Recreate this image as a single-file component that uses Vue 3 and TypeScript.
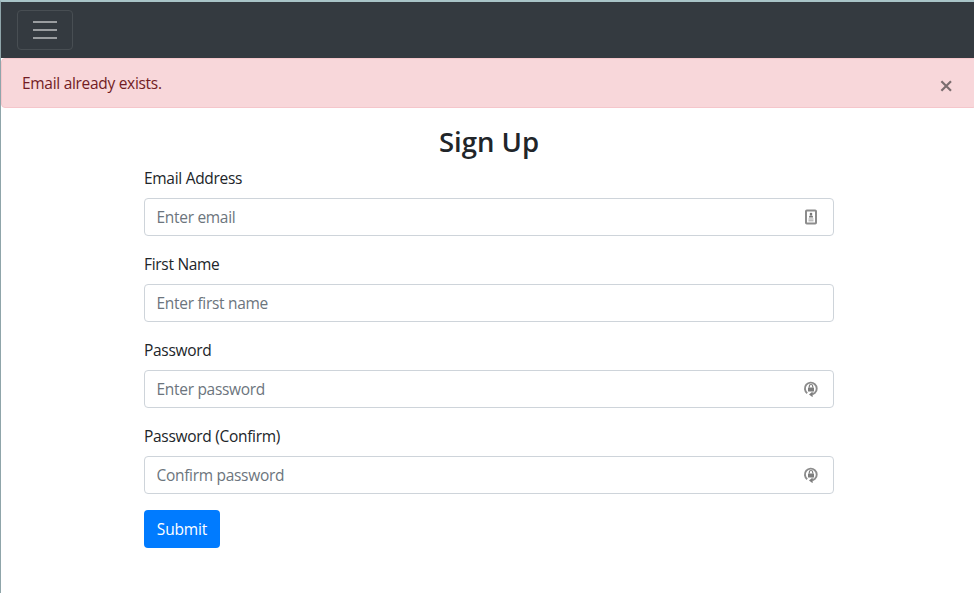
<script setup lang="ts">
import { ref } from 'vue'

interface Field {
  id: string
  label: string
  type: string
  placeholder: string
  icon?: 'contact' | 'lock'
}

const fields: Field[] = [
  { id: 'email', label: 'Email Address', type: 'email', placeholder: 'Enter email', icon: 'contact' },
  { id: 'firstName', label: 'First Name', type: 'text', placeholder: 'Enter first name' },
  { id: 'password1', label: 'Password', type: 'password', placeholder: 'Enter password', icon: 'lock' },
  { id: 'password2', label: 'Password (Confirm)', type: 'password', placeholder: 'Confirm password', icon: 'lock' },
]

const showAlert = ref(true)
</script>

<template>
  <div class="page">
    <nav class="navbar">
      <button class="toggler" type="button" aria-label="Toggle navigation">
        <svg width="30" height="30" viewBox="0 0 30 30">
          <path d="M3 7h24M3 15h24M3 23h24" stroke="#9a9da0" stroke-width="2" />
        </svg>
      </button>
    </nav>
    <div v-if="showAlert" class="alert" role="alert">
      <span class="message">Email already exists.</span>
      <button class="close" type="button" aria-label="Close" @click="showAlert = false">
        <svg width="12" height="12" viewBox="0 0 12 12">
          <path d="M1.4 1.2 11 10.8M11 1.2 1.4 10.8" stroke="#7b6d6f" stroke-width="2.2" />
        </svg>
      </button>
    </div>
    <form class="container" @submit.prevent>
      <h3 class="title">Sign Up</h3>
      <div v-for="field in fields" :key="field.id" class="group">
        <label class="label" :for="field.id">{{ field.label }}</label>
        <div class="control">
          <input :id="field.id" class="input" :type="field.type" :placeholder="field.placeholder" />
          <svg v-if="field.icon === 'contact'" class="icon" width="16" height="16" viewBox="0 0 16 16">
            <rect x="3" y="1.5" width="10" height="13" rx=".8" fill="#fff" stroke="#8c8c8c" stroke-width="2" />
            <circle cx="8" cy="5" r="1.3" fill="#777" />
            <path d="M6 8.6V7.7Q6 6.2 8 6.2T10 7.7V8.6Z" fill="#777" />
            <path d="M5.5 10h5M5.5 11.8h5" stroke="#a0a0a0" stroke-width="1" />
          </svg>
          <svg v-else-if="field.icon === 'lock'" class="icon" width="16" height="16" viewBox="0 0 16 16">
            <path d="M4.2 12.2A5.9 5.9 0 1 1 12 11.7L9.2 13.4" fill="none" stroke="#8c8c8c" stroke-width="1.9" />
            <path d="M9.6 10.6V16.2L6 13.4Z" fill="#7d7d7d" />
            <rect x="5" y="6.4" width="6" height="4.2" rx=".4" fill="#7d7d7d" />
            <path d="M6.3 6.6V5.2a1.7 1.7 0 0 1 3.4 0v1.4" fill="none" stroke="#7d7d7d" stroke-width="1.2" />
          </svg>
        </div>
      </div>
      <button class="submit" type="submit">Submit</button>
    </form>
  </div>
</template>

<style>
body {
  overflow: hidden;
  background: #fff;
}
</style>

<style scoped>
.page,
.page * {
  box-sizing: border-box;
}
.page {
  width: 977px;
  height: 593px;
  border-top: 2px solid #a9c4c8;
  border-left: 1px solid #8fa5aa;
  background: #fff;
  color: #212529;
  font-family: 'Open Sans', 'Noto Sans', sans-serif;
  font-size: 15.5px;
  line-height: 24px;
  letter-spacing: -0.3px;
}
button {
  font: inherit;
  letter-spacing: inherit;
  cursor: pointer;
}
.navbar {
  display: flex;
  align-items: center;
  height: 56px;
  padding: 8px 16px;
  background: #343a40;
}
.toggler {
  display: flex;
  align-items: center;
  justify-content: center;
  width: 56px;
  height: 40px;
  padding: 0;
  border: 1px solid #484e53;
  border-radius: 4px;
  background: transparent;
}
.alert {
  display: flex;
  align-items: center;
  justify-content: space-between;
  height: 50px;
  padding: 0 24px 0 20px;
  border: 1px solid #f5c6cb;
  border-radius: 4px;
  background: #f8d7da;
  color: #721c24;
}
.close {
  display: flex;
  margin-top: 6px;
  padding: 0;
  border: 0;
  background: transparent;
}
.container {
  width: 720px;
  margin: 0 auto;
  padding: 17px 15px 0;
}
.title {
  margin: 0 0 7px;
  font-size: 27.5px;
  font-weight: 550;
  line-height: 34px;
  letter-spacing: 0;
  text-align: center;
}
.group {
  margin-bottom: 16px;
}
.label {
  display: block;
  margin-bottom: 8px;
}
.control {
  display: flex;
  align-items: center;
  height: 38px;
  padding: 0 14px 0 11.5px;
  border: 1px solid #ced4da;
  border-radius: 4px;
}
.input {
  flex: 1;
  min-width: 0;
  height: 36px;
  padding: 0;
  border: 0;
  outline: 0;
  background: transparent;
  color: #495057;
  font: inherit;
  letter-spacing: inherit;
}
.input::placeholder {
  color: #6c757d;
  opacity: 1;
}
.icon {
  flex: none;
}
.submit {
  display: block;
  width: 76px;
  height: 38px;
  padding: 0;
  border: 0;
  border-radius: 4px;
  background: #007bff;
  color: #fff;
  letter-spacing: -0.15px;
}
</style>
